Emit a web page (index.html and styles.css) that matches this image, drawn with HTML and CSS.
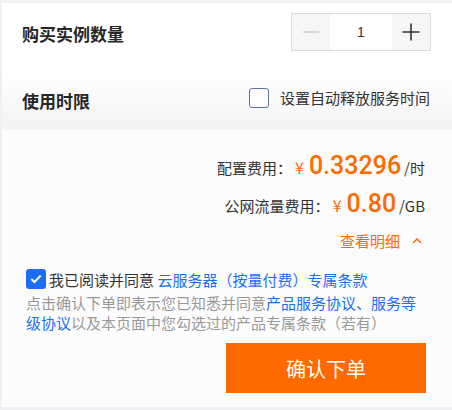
FILE: index.html
```html
<!DOCTYPE html>
<html lang="zh-CN">
<head>
<meta charset="utf-8">
<link rel="stylesheet" href="styles.css">
</head>
<body>
<div class="frame">
  <div class="card">
    <section class="top">
      <div class="row">
        <div class="label">购买实例数量</div>
        <div class="stepper">
          <div class="step-btn minus">
            <svg width="18" height="18" viewBox="0 0 18 18"><path d="M1 9H17" stroke="#cfcfcf" stroke-width="1.4"/></svg>
          </div>
          <div class="step-val">1</div>
          <div class="step-btn plus">
            <svg width="18" height="18" viewBox="0 0 18 18"><path d="M0.5 9H17.5M9 0.5V17.5" stroke="#333" stroke-width="1.6"/></svg>
          </div>
        </div>
      </div>
      <div class="row">
        <div class="label">使用时限</div>
        <label class="auto">
          <span class="box"></span>
          <span>设置自动释放服务时间</span>
        </label>
      </div>
    </section>
    <section class="bottom">
      <div class="price p1">
        <span class="plabel">配置费用：</span>
        <span class="yen">¥</span>
        <span class="num">0.33296</span>
        <span class="unit">/时</span>
      </div>
      <div class="price p2">
        <span class="plabel">公网流量费用：</span>
        <span class="yen">¥</span>
        <span class="num">0.80</span>
        <span class="unit">/GB</span>
      </div>
      <div class="detail">
        <span>查看明细</span>
        <svg width="10" height="7" viewBox="0 0 10 7"><path d="M1 6L5 2L9 6" fill="none" stroke="#ff6a00" stroke-width="1.5"/></svg>
      </div>
      <div class="agree">
        <span class="checked">
          <svg width="12" height="10" viewBox="0 0 12 10"><path d="M1.3 5L4.5 8L10.7 1.6" fill="none" stroke="#fff" stroke-width="2"/></svg>
        </span>
        <span class="agree-text">我已阅读并同意 <a class="link">云服务器（按量付费）专属条款</a></span>
      </div>
      <p class="notice">点击确认下单即表示您已知悉并同意<a class="link">产品服务协议、服务等级协议</a>以及本页面中您勾选过的产品专属条款（若有）</p>
      <button class="submit">确认下单</button>
    </section>
  </div>
</div>
</body>
</html>
```

FILE: styles.css
```css
* { box-sizing: border-box; }
html, body {
  margin: 0;
  padding: 0;
}
body {
  width: 452px;
  height: 410px;
  overflow: hidden;
  font-family: "Noto Sans CJK SC", "Noto Sans", sans-serif;
  color: #333;
}
.frame {
  height: 410px;
  background: #eff0f3;
  padding: 3px 0 3px 2px;
}
.card {
  height: 404px;
  background: #fcfcfc;
  display: flex;
  flex-direction: column;
}
.top {
  height: 127px;
  padding: 10px 21px 0 20px;
  background: linear-gradient(#ffffff 55%, #f3f3f3 100%);
  display: flex;
  flex-direction: column;
  gap: 27px;
}
.row {
  height: 38px;
  display: flex;
  align-items: center;
  justify-content: space-between;
}
.row + .row { padding-top: 1px; }
.label {
  font-size: 17px;
  font-weight: 700;
  color: #262626;
  line-height: 24px;
}
.row:first-child .label { padding-top: 3px; }
.row + .row .label { padding-top: 6px; }
.stepper {
  display: flex;
  height: 38px;
  border: 1px solid #dcdcdc;
}
.step-btn {
  width: 38px;
  background: #f5f6f8;
  display: flex;
  align-items: center;
  justify-content: center;
}
.step-val {
  width: 62px;
  background: #fff;
  display: flex;
  align-items: center;
  justify-content: center;
  font-family: "Liberation Sans", sans-serif;
  font-size: 14px;
  color: #333;
}
.auto {
  display: flex;
  align-items: center;
  gap: 11px;
  font-size: 15px;
  color: #333;
  margin-right: 1px;
}
.box {
  width: 20px;
  height: 20px;
  border: 1.5px solid #5b7597;
  border-radius: 3px;
  background: #fff;
}
.bottom {
  flex: 1;
  padding: 18px 27px 14px 24px;
  display: flex;
  flex-direction: column;
}
.price {
  height: 36px;
  display: flex;
  justify-content: flex-end;
  align-items: baseline;
  font-size: 15px;
  line-height: 36px;
}
.p2 { margin-top: 2px; }
.plabel { color: #333; }
.yen {
  color: #ff6a00;
  font-size: 16px;
  margin-left: 3px;
  margin-right: 5px;
}
.num {
  color: #ff6a00;
  font-family: "Roboto", "Liberation Sans", sans-serif;
  font-weight: 500;
  font-size: 25px;
  margin-right: 3px;
}
.unit { color: #333; }
.detail {
  margin-top: 6px;
  height: 24px;
  display: flex;
  justify-content: flex-end;
  align-items: center;
  gap: 12px;
  color: #ff6a00;
  font-size: 15px;
  padding-right: 3px;
}
.agree {
  margin-top: 15px;
  height: 24px;
  display: flex;
  align-items: center;
  gap: 3px;
  font-size: 15px;
}
.checked {
  width: 20px;
  height: 20px;
  border-radius: 3px;
  background: #1b6ef3;
  display: flex;
  align-items: center;
  justify-content: center;
}
.agree-text { color: #333; }
.link { color: #1b6ef3; text-decoration: none; }
.notice {
  margin: 2px 0 0 0;
  font-size: 15px;
  line-height: 20px;
  color: #999;
}
.submit {
  margin-top: 10px;
  align-self: flex-end;
  margin-right: -1px;
  width: 200px;
  height: 50px;
  border: none;
  background: #ff6a00;
  color: #fff;
  font-family: "Noto Sans CJK SC", sans-serif;
  font-size: 20px;
  padding: 0;
}
```
